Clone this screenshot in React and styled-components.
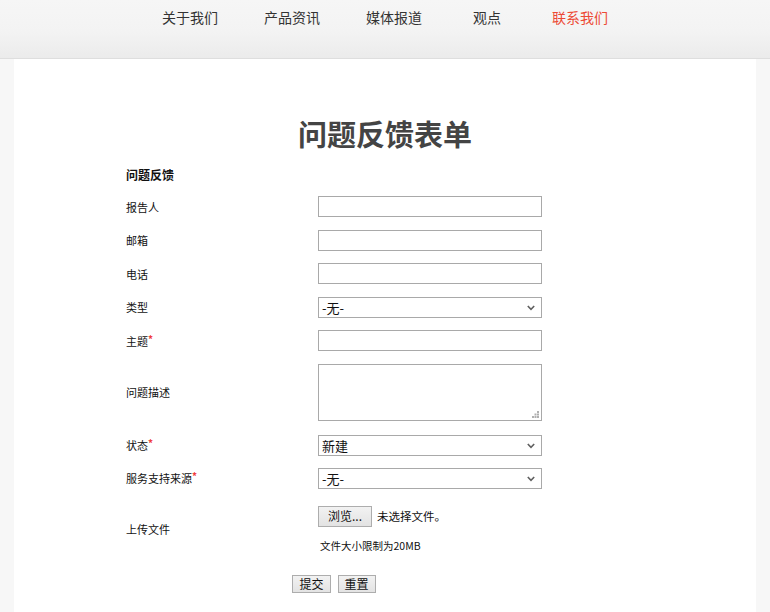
import React from "react";
import styled, { createGlobalStyle } from "styled-components";

const Global = createGlobalStyle`
  html, body { margin: 0; padding: 0; background: #f7f7f7; }
  body { font-family: "Noto Sans CJK SC", "Noto Sans", sans-serif; color: #222; }
  * { box-sizing: border-box; }
`;

const Header = styled.header`
  height: 59px;
  background: linear-gradient(to bottom, #f6f6f6 0%, #f3f3f3 55%, #ebebeb 100%);
  border-bottom: 1px solid #dedede;
  display: flex;
  justify-content: center;
  align-items: flex-start;
`;

const Nav = styled.nav`
  display: flex;
  gap: 46px;
  padding-top: 6px;
`;

const NavItem = styled.a`
  font-size: 14px;
  line-height: 22px;
  color: ${(p) => (p.$active ? "#ec4a35" : "#333")};
  text-decoration: none;
  padding: 0 ${(p) => p.$pad || 0}px;
`;

const Panel = styled.main`
  margin: 0 14px;
  background: #fff;
  min-height: 553px;
  padding: 52px 0 0;
`;

const Title = styled.h1`
  margin: 0;
  text-align: center;
  font-size: 29px;
  line-height: 44px;
  font-weight: 700;
  color: #444;
`;

const Form = styled.form`
  width: 416px;
  margin-left: 112px;
  padding-top: 11px;
`;

const Section = styled.div`
  font-size: 12px;
  font-weight: 700;
  line-height: 18px;
  color: #111;
  margin-bottom: 12px;
`;

const Row = styled.div`
  display: grid;
  grid-template-columns: 192px 224px;
  align-items: center;
  margin-bottom: ${(p) => p.$mb ?? 12.5}px;
`;

const Label = styled.label`
  font-size: 11px;
  color: #111;
`;

const Star = styled.span`
  color: #f03c3c;
  font-size: 10px;
  font-weight: 700;
  vertical-align: top;
  line-height: 12px;
`;

const TextInput = styled.input`
  display: block;
  width: 224px;
  height: 21px;
  border: 1px solid #a9a9a9;
  padding: 0 4px;
  font-size: 13px;
  outline: none;
`;

const SelectWrap = styled.div`
  position: relative;
  width: 224px;
  height: 21px;
`;

const Select = styled.select`
  display: block;
  width: 224px;
  height: 21px;
  border: 1px solid #a9a9a9;
  border-radius: 0;
  padding: 0 3px;
  font-size: 13px;
  line-height: 19px;
  font-family: "Noto Sans CJK SC", sans-serif;
  color: #111;
  background: #fff;
  appearance: none;
  -webkit-appearance: none;
  outline: none;
`;

const Chevron = styled.svg`
  position: absolute;
  right: 7px;
  top: 8px;
  pointer-events: none;
`;

const AreaWrap = styled.div`
  position: relative;
  width: 224px;
  height: 57px;
`;

const TextArea = styled.textarea`
  width: 224px;
  height: 57px;
  border: 1px solid #a9a9a9;
  border-radius: 0;
  resize: none;
  display: block;
  outline: none;
`;

const Grip = styled.svg`
  position: absolute;
  right: 3px;
  bottom: 3px;
  pointer-events: none;
`;

const FileCell = styled.div`
  display: flex;
  flex-direction: column;
`;

const FileLine = styled.div`
  display: flex;
  align-items: center;
  gap: 5px;
  font-size: 11.5px;
  color: #111;
`;

const Button = styled.button`
  height: ${(p) => p.$h || 18}px;
  padding: 0 ${(p) => p.$px || 6}px;
  font-size: 12px;
  font-family: "Noto Sans CJK SC", sans-serif;
  line-height: 1;
  color: #111;
  border: 1px solid #adadad;
  border-radius: 0;
  background: linear-gradient(to bottom, #f2f2f2, #e3e3e3);
`;

const Note = styled.div`
  font-size: 10.5px;
  color: #111;
  margin: 11px 0 0 2px;
`;

const Actions = styled.div`
  display: flex;
  justify-content: center;
  gap: 7px;
  padding-top: 22px;
`;

const navItems = [
  { t: "关于我们" },
  { t: "产品资讯" },
  { t: "媒体报道" },
  { t: "观点", pad: 5 },
  { t: "联系我们", active: true },
];

function Dropdown({ value, children }) {
  return (
    <SelectWrap>
      <Select defaultValue={value}>{children}</Select>
      <Chevron width="8" height="6" viewBox="0 0 8 6">
        <path d="M0.8 1 L4 4.3 L7.2 1" fill="none" stroke="#606060" strokeWidth="1.6" />
      </Chevron>
    </SelectWrap>
  );
}

export default function App() {
  return (
    <>
      <Global />
      <Header>
        <Nav>
          {navItems.map((n) => (
            <NavItem key={n.t} href="#" $active={n.active} $pad={n.pad}>
              {n.t}
            </NavItem>
          ))}
        </Nav>
      </Header>
      <Panel>
        <Title>问题反馈表单</Title>
        <Form onSubmit={(e) => e.preventDefault()}>
          <Section>问题反馈</Section>
          <Row>
            <Label>报告人</Label>
            <TextInput />
          </Row>
          <Row>
            <Label>邮箱</Label>
            <TextInput />
          </Row>
          <Row>
            <Label>电话</Label>
            <TextInput />
          </Row>
          <Row>
            <Label>类型</Label>
            <Dropdown value="none">
              <option value="none">-无-</option>
            </Dropdown>
          </Row>
          <Row>
            <Label>
              主题<Star>*</Star>
            </Label>
            <TextInput />
          </Row>
          <Row $mb={14}>
            <Label>问题描述</Label>
            <AreaWrap>
              <TextArea />
              <Grip width="7" height="7" viewBox="0 0 7 7">
                <g fill="#b0b0b0">
                  <rect x="5" y="0" width="2" height="2" />
                  <rect x="2.5" y="2.5" width="2" height="2" />
                  <rect x="5" y="2.5" width="2" height="2" />
                  <rect x="0" y="5" width="2" height="2" />
                  <rect x="2.5" y="5" width="2" height="2" />
                  <rect x="5" y="5" width="2" height="2" />
                </g>
              </Grip>
            </AreaWrap>
          </Row>
          <Row $mb={12}>
            <Label>
              状态<Star>*</Star>
            </Label>
            <Dropdown value="new">
              <option value="new">新建</option>
            </Dropdown>
          </Row>
          <Row $mb={17}>
            <Label>
              服务支持来源<Star>*</Star>
            </Label>
            <Dropdown value="none">
              <option value="none">-无-</option>
            </Dropdown>
          </Row>
          <Row $mb={0}>
            <Label>上传文件</Label>
            <FileCell>
              <FileLine>
                <Button type="button" $h={21} $px={9}>浏览...</Button>
                <span>未选择文件。</span>
              </FileLine>
              <Note>文件大小限制为20MB</Note>
            </FileCell>
          </Row>
          <Actions>
            <Button type="submit">提交</Button>
            <Button type="reset">重置</Button>
          </Actions>
        </Form>
      </Panel>
    </>
  );
}
